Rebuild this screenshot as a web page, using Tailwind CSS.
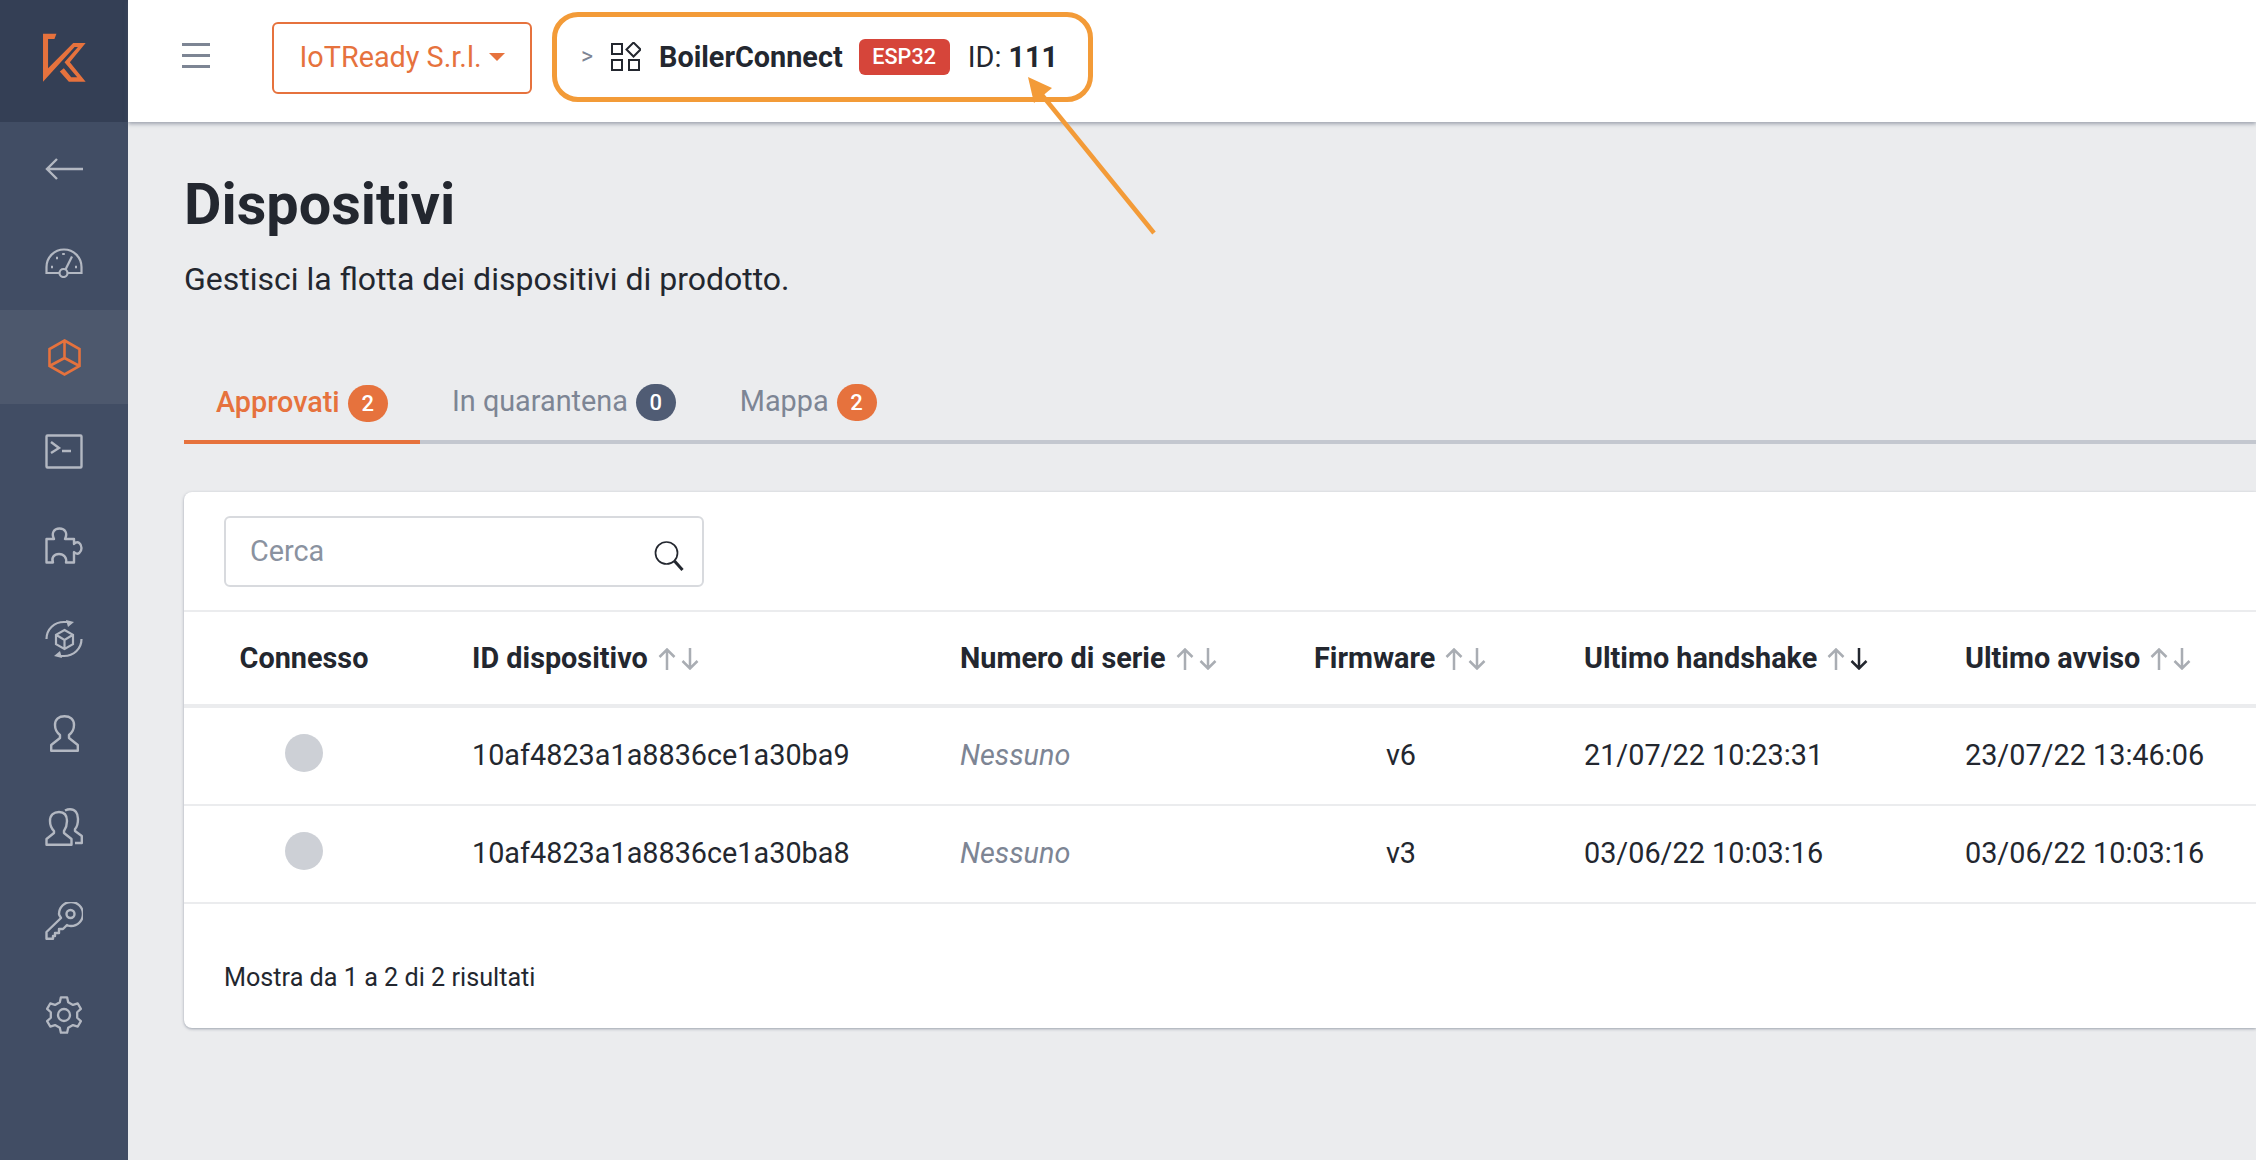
<!DOCTYPE html>
<html>
<head>
<meta charset="utf-8">
<script src="https://cdn.jsdelivr.net/npm/@tailwindcss/browser@4"></script>
</head>
<body class="font-['Roboto',sans-serif] bg-[#ebecee] text-[#23272f] overflow-hidden">
<div class="relative flex h-[1160px] w-[2256px] overflow-hidden">
  <aside class="flex w-[128px] shrink-0 flex-col bg-[#414d64]">
    <div class="flex h-[122px] items-center justify-center bg-[#343f55] pb-[7px]">
      <svg width="43" height="49" viewBox="128 100 128 146"><path fill="#e6723d" d="M128 102H168L162 118H143V205L218 130H255L208 187L255 245H205L178 215L190 205L212 232H230L192 187L232 142H222L128 245Z"/></svg>
    </div>
    <nav class="flex flex-1 flex-col text-[#b3b8c2]">
      <div class="flex h-[94px] items-center justify-center">
        <svg width="38" height="22" viewBox="0 0 38 22" fill="none" stroke="currentColor" stroke-width="2.4"><path d="M38 11H2M12 1 2 11l10 10"/></svg>
      </div>
      <div class="flex h-[94px] items-center justify-center">
        <svg width="38" height="30" viewBox="0 0 38 30" fill="none" stroke="currentColor" stroke-width="2.2"><path d="M14 25H1.500V19a17.500 17.500 0 0 1 35 0v6H23"/><circle cx="18.500" cy="25" r="4"/><path d="m20.500 21.500 6.500-13"/><path d="M6 19h2M11 10h2M18.500 5v2M30 19h2" stroke-width="2.6"/></svg>
      </div>
      <div class="flex h-[94px] items-center justify-center bg-[#4d586d] text-[#e6723d]">
        <svg width="33" height="37" viewBox="0 0 33 37" fill="none" stroke="currentColor" stroke-width="2.6"><path d="M16.500 1.500 31.500 10v17l-15 8.500-15-8.500V10zM16.500 1.500V19M16.500 19l-15 8M16.500 19l15 8"/></svg>
      </div>
      <div class="flex h-[94px] items-center justify-center">
        <svg width="38" height="35" viewBox="0 0 38 35" fill="none" stroke="currentColor" stroke-width="2.4"><rect x="1.500" y="1.500" width="35" height="32" rx="1"/><path d="m6 8 8 6-8 5M17 17h9"/></svg>
      </div>
      <div class="flex h-[94px] items-center justify-center">
        <svg width="38" height="37" viewBox="0 0 38 37" fill="none" stroke="currentColor" stroke-width="2.4" stroke-linejoin="round"><path d="M1.500 35.500V12H9C6 6 9 1.500 14.500 1.500S23 6 20 12H29V17C33 13 36.500 17 36.500 21S33 29 29 25V35.500H21C22 31 19 27 14 27S6 31 8 35.500Z"/></svg>
      </div>
      <div class="flex h-[94px] items-center justify-center">
        <svg width="38" height="38" viewBox="0 0 38 38" fill="none" stroke="currentColor" stroke-width="2.2"><path d="M19.500 10 28 14.800v9.400L19.500 29 11 24.200v-9.400zM19.500 20v9M11 14.800l8.500 5.200 8.500-5.200"/><path d="M1.500 19C1.500 9 9.500 2 19 2h6M36.500 19c0 10-8 17-17.500 17h-6"/><path d="m21 0 8 2-6 5zM17 38l-8-2 6-5z" fill="currentColor" stroke="none"/></svg>
      </div>
      <div class="flex h-[94px] items-center justify-center">
        <svg width="29" height="37" viewBox="0 0 29 37" fill="none" stroke="currentColor" stroke-width="2.4" stroke-linejoin="round"><path d="M1.200 35.800V30L10 23V20C6 17 5 13 5 10C5 4 9 1.200 14.500 1.200S24 4 24 10C24 13 23 17 19 20V23L27.800 30V35.800Z"/></svg>
      </div>
      <div class="flex h-[94px] items-center justify-center">
        <svg width="38" height="38" viewBox="0 0 38 38" fill="none" stroke="currentColor" stroke-width="2.4" stroke-linejoin="round"><path d="M1.500 36.800V31L9 25V23C6 20 5 16 5 13C5 7 9 4 14 4S22 7 22 13C22 16 21 20 19 23V25L26.500 31V36.800Z"/><path d="M20 2.500C22 1.500 24 1.200 25 1.200C30 1.200 33 5 33 11C33 15 32 19 30 21V23L36.800 28V35H30"/></svg>
      </div>
      <div class="flex h-[94px] items-center justify-center">
        <svg width="38" height="38" viewBox="0 0 38 38" fill="none" stroke="currentColor" stroke-width="2.4" stroke-linejoin="round"><path d="M1.500 36.800V30L16 16C15 14 14 13 14 12A12 12 0 1 1 26 24C24 24 23 24 22 23L18 27H14V31H10V34H8V36.800Z"/><circle cx="25.500" cy="12" r="4"/></svg>
      </div>
      <div class="flex h-[94px] items-center justify-center">
        <svg width="36" height="38" viewBox="-18 -19 36 38" fill="none" stroke="currentColor" stroke-width="2.3" stroke-linejoin="round"><polygon points="-4.200,-12.800 -3.100,-17.700 3.100,-17.700 4.200,-12.800 8.980,-10.040 13.780,-11.530 16.880,-6.170 13.180,-2.760 13.180,2.760 16.880,6.170 13.780,11.530 8.980,10.040 4.200,12.800 3.100,17.700 -3.100,17.700 -4.200,12.800 -8.980,10.040 -13.780,11.530 -16.880,6.170 -13.180,2.760 -13.180,-2.760 -16.880,-6.170 -13.780,-11.530 -8.980,-10.040"/><circle cx="0" cy="0" r="6"/></svg>
      </div>
    </nav>
  </aside>

  <div class="flex min-w-0 flex-1 flex-col">
    <header class="flex h-[122px] shrink-0 items-center bg-white pb-[8px] pl-[54px] shadow-[0_2px_4px_rgba(80,90,110,0.5)]">
      <div class="-mt-[3px] flex w-[28px] flex-col gap-[8px]">
        <span class="h-[3px] bg-[#7d8594]"></span><span class="h-[3px] bg-[#7d8594]"></span><span class="h-[3px] bg-[#7d8594]"></span>
      </div>
      <div class="ml-[62px] mt-[1px] flex h-[72px] w-[260px] items-center justify-center gap-[7px] rounded-[6px] border-2 border-[#e6723d] pt-[1px] text-[28.800px] text-[#e6723d]">
        <span>IoTReady S.r.l.</span><span class="mb-[3px] h-0 w-0 border-x-[8px] border-t-[8px] border-x-transparent border-t-[#e6723d]"></span>
      </div>
      <div class="ml-[20px] flex h-[90px] w-[541px] items-center rounded-[26px] border-[5px] border-[#f39b38] pl-[24px]">
        <span class="w-[13px] text-[23px] text-[#7d8594]">&gt;</span>
        <svg class="ml-[17px]" width="30" height="30" viewBox="0 0 30 30" fill="none" stroke="#23272f" stroke-width="2"><rect x="1" y="2" width="10" height="10"/><path d="m23 0 7 7-7 7-7-7z" transform="translate(-.5 .5)"/><rect x="1" y="18" width="10" height="10"/><rect x="18" y="18" width="10" height="10"/></svg>
        <span class="ml-[18px] pt-[2px] text-[28.800px] font-bold">BoilerConnect</span>
        <span class="ml-[16px] flex h-[36px] w-[91px] items-center justify-center rounded-[6px] bg-[#d6453a] text-[21.600px] font-medium text-white">ESP32</span>
        <span class="ml-[18px] pt-[2px] text-[28.800px]">ID: <b class="font-bold">111</b></span>
      </div>
    </header>

    <main class="flex-1 pl-[56px]">
      <h1 class="mt-[52px] text-[57.600px] font-bold leading-[62px]">Dispositivi</h1>
      <p class="mt-[25px] text-[32px] leading-[36px]">Gestisci la flotta dei dispositivi di prodotto.</p>

      <div class="mt-[77px] flex h-[70px] border-b-[4px] border-[#c3c7cf] text-[28.800px] text-[#7d8594]">
        <div class="-mb-[4px] flex h-[70px] w-[236px] items-center gap-[8px] border-b-[4px] border-[#e6723d] pb-[8px] pl-[32px] font-medium text-[#e6723d]">
          <span>Approvati</span><span class="flex h-[37px] w-[40px] items-center justify-center rounded-full bg-[#e6723d] text-[22px] text-white">2</span>
        </div>
        <div class="ml-[32px] flex items-center gap-[8px] pb-[10px]">
          <span>In quarantena</span><span class="flex h-[37px] w-[40px] items-center justify-center rounded-full bg-[#505c74] text-[22px] font-medium text-white">0</span>
        </div>
        <div class="ml-[64px] flex items-center gap-[8px] pb-[10px]">
          <span>Mappa</span><span class="flex h-[37px] w-[40px] items-center justify-center rounded-full bg-[#e6723d] text-[22px] font-medium text-white">2</span>
        </div>
      </div>

      <section class="mt-[48px] h-[536px] rounded-l-[8px] bg-white shadow-[0_1px_3px_rgba(80,90,110,0.5)]">
        <div class="flex h-[120px] items-center border-b-[2px] border-[#ebecee] pl-[40px]">
          <div class="flex h-[71px] w-[480px] items-center justify-between rounded-[6px] border-2 border-[#d8dade] pl-[24px] pr-[18px] text-[28.800px] text-[#8a92a0]">
            <span class="pt-[1px]">Cerca</span>
            <svg class="mt-[9px]" width="30" height="30" viewBox="0 0 30 30" fill="none" stroke="#23272f" stroke-width="1.700"><circle cx="12.500" cy="12" r="11"/><path d="m20.500 20 8 9" stroke-width="3"/></svg>
          </div>
        </div>
        <div class="grid h-[96px] grid-cols-[288px_488px_354px_270px_381px_1fr] items-center border-b-[4px] border-[#ebecee] pt-[1px] text-[28.800px] font-bold">
          <div class="w-[240px] text-center">Connesso</div>
          <div class="flex items-center gap-[10px]">ID dispositivo <svg width="41" height="22" viewBox="0 0 41 22" fill="none" stroke="#a9adb3" stroke-width="2.500"><path d="M9 22V2M1.500 9 9 1.500 16.500 9M32 0v20M24.500 13l7.500 7.500 7.500-7.500"/></svg></div>
          <div class="flex items-center gap-[10px]">Numero di serie <svg width="41" height="22" viewBox="0 0 41 22" fill="none" stroke="#a9adb3" stroke-width="2.500"><path d="M9 22V2M1.500 9 9 1.500 16.500 9M32 0v20M24.500 13l7.500 7.500 7.500-7.500"/></svg></div>
          <div class="flex items-center gap-[10px]">Firmware <svg width="41" height="22" viewBox="0 0 41 22" fill="none" stroke="#a9adb3" stroke-width="2.500"><path d="M9 22V2M1.500 9 9 1.500 16.500 9M32 0v20M24.500 13l7.500 7.500 7.500-7.500"/></svg></div>
          <div class="flex items-center gap-[10px]">Ultimo handshake <svg width="41" height="22" viewBox="0 0 41 22" fill="none" stroke-width="2.500"><path d="M9 22V2M1.500 9 9 1.500 16.500 9" stroke="#a9adb3"/><path d="M32 0v20M24.500 13l7.500 7.500 7.500-7.500" stroke="#23272f"/></svg></div>
          <div class="flex items-center gap-[10px]">Ultimo avviso <svg width="41" height="22" viewBox="0 0 41 22" fill="none" stroke="#a9adb3" stroke-width="2.500"><path d="M9 22V2M1.500 9 9 1.500 16.500 9M32 0v20M24.500 13l7.500 7.500 7.500-7.500"/></svg></div>
        </div>
        <div class="grid h-[98px] grid-cols-[288px_488px_354px_270px_381px_1fr] items-center border-b-[2px] border-[#ebecee] text-[28.800px]">
          <div class="flex w-[240px] justify-center"><span class="-mt-[7px] h-[38px] w-[38px] rounded-full bg-[#cdd0d6]"></span></div>
          <div>10af4823a1a8836ce1a30ba9</div>
          <div class="italic text-[#7d8594]">Nessuno</div>
          <div class="w-[174px] text-center">v6</div>
          <div>21/07/22 10:23:31</div>
          <div>23/07/22 13:46:06</div>
        </div>
        <div class="grid h-[98px] grid-cols-[288px_488px_354px_270px_381px_1fr] items-center border-b-[2px] border-[#ebecee] text-[28.800px]">
          <div class="flex w-[240px] justify-center"><span class="-mt-[7px] h-[38px] w-[38px] rounded-full bg-[#cdd0d6]"></span></div>
          <div>10af4823a1a8836ce1a30ba8</div>
          <div class="italic text-[#7d8594]">Nessuno</div>
          <div class="w-[174px] text-center">v3</div>
          <div>03/06/22 10:03:16</div>
          <div>03/06/22 10:03:16</div>
        </div>
        <div class="pl-[40px] pt-[59px] text-[25.200px] leading-[30px]">Mostra da 1 a 2 di 2 risultati</div>
      </section>
    </main>
  </div>

  <svg class="pointer-events-none absolute left-[1020px] top-[70px]" width="140" height="170" viewBox="0 0 140 170" fill="none"><path d="M22 25 134 163" stroke="#f39b38" stroke-width="4.500"/><path d="M8 7 32 18 14 33Z" fill="#f39b38"/></svg>
</div>
</body>
</html>
